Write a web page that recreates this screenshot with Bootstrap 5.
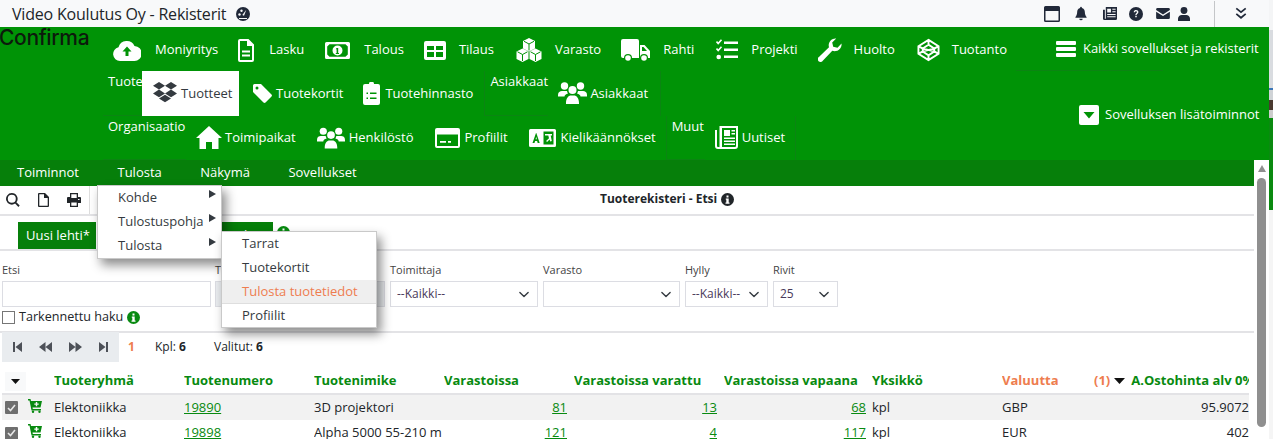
<!DOCTYPE html>
<html lang="fi">
<head>
  <meta charset="UTF-8">
  <title>Video Koulutus Oy - Rekisterit</title>
  <link href="https://cdn.jsdelivr.net/npm/bootstrap@5.3.0/dist/css/bootstrap.min.css" rel="stylesheet">
  <style>
    html, body { height: 439px; overflow: hidden; }
    body { background: #fff; font-family: "Open Sans", "Liberation Sans", sans-serif; font-size: 12px; color: #212529; }
    svg { display: block; flex: none; fill: currentColor; }
    .frame { width: 1269px; height: 439px; position: relative; overflow: hidden; }
    .edge-strip { position: absolute; left: 1269px; top: 0; width: 4px; height: 439px; background: #f5f5f5; }
    .edge-a { height: 30px; background: #f4f5f6; }
    .edge-b { height: 58px; background: #d9dce0; }
    .edge-c { height: 2px; background: #3b77b8; }
    .edge-d { height: 10px; background: #cfd3d6; }
    .edge-e { height: 10px; background: #4a3a30; }
    .edge-f { height: 8px; background: #cccccc; }
    .edge-g { height: 92px; background: #0a8a10; }

    .topbar { height: 27px; background: #f8f9fa; padding: 0 22px 0 12px; }
    .topbar-title { font-size: 16px; letter-spacing: -.2px; margin-right: 10px; }
    .top-icons { color: #212939; }
    .top-sep { width: 1px; height: 26px; background: #c4c6c8; margin: 0 20px 0 24px; }
    .gap-15 { margin-right: 15px; }
    .gap-16 { margin-right: 16px; }
    .gap-12 { margin-right: 12px; }
    .gap-13 { margin-right: 13px; }
    .gap-8 { margin-right: 8px; }

    .green-head { height: 133px; background: #009306; color: #fff; position: relative; }
    .logo-text { position: absolute; left: -1px; top: -1px; font-size: 21px; font-weight: 500; color: #0c1a0c; letter-spacing: -.35px; line-height: 24px; font-family: "Inter", sans-serif; }
    .app-row { height: 44px; padding-left: 113px; }
    .app-link { font-size: 13px; color: #fff; text-decoration: none; display: flex; align-items: center; height: 44px; padding-top: 2px; }
    .sub-row { height: 44.5px; }
    .sub-link { font-size: 13px; color: #fff; display: flex; align-items: center; height: 44.5px; white-space: nowrap; }
    .sub-link.current { background: #fff; color: #343a40; width: 97px; padding-left: 11px; position: relative; z-index: 1; }
    .group-label { font-size: 13px; line-height: 18px; padding: 1px 0 0 5px; height: 44.5px; white-space: nowrap; border-bottom: 1px solid #0b8512; }
    .group-tuote { margin-left: 103px; width: 39px; }
    .group-org { margin-left: 103px; width: 83px; }
    .group-asiakas { margin-left: 11px; width: 64px; border-left: 1px solid #0b8512; }
    .group-muut { width: 39px; border-left: 1px solid #0b8512; }
    .group-end { border-right: 1px solid #0b8512; }
    .ml-10 { margin-left: 10px; }
    .ml-12 { margin-left: 12px; }
    .ml-14 { margin-left: 14px; }
    .ml-20 { margin-left: 20px; }
    .ml-21 { margin-left: 21px; }
    .ml-22 { margin-left: 22px; }
    .ml-23 { margin-left: 23px; }
    .txt-3 span { margin-left: 3px; }
    .txt-4 span { margin-left: 4px; }
    .txt-5 span { margin-left: 5px; }
    .txt-12 span { margin-left: 12px; }
    .txt-13 span { margin-left: 13px; }
    .txt-14 span { margin-left: 14px; }
    .txt-15 span { margin-left: 15px; }

    .green-side { position: absolute; left: 1016px; top: 0; width: 243px; font-size: 13px; white-space: nowrap; }
    .side-all { height: 44px; width: 147px; padding-left: 40px; border-bottom: 1px solid #0b8512; }
    .side-all span { margin-left: 7px; letter-spacing: -.06px; }
    .side-extra { height: 20px; margin-top: 34px; padding-left: 63px; }
    .side-extra span { margin-left: 6px; }

    .submenu-bar { height: 26px; width: 1254px; background: #067f0a; color: #fff; font-size: 13px; padding-left: 17px; gap: 38.5px; }
    .scroll-col { position: absolute; left: 1254px; top: 160px; width: 15px; bottom: 0; background: #fff; }
    .scroll-up { width: 0; height: 0; border-left: 4.5px solid transparent; border-right: 4.5px solid transparent; border-bottom: 7px solid #8f8f8f; margin: 5px auto 6px; }
    .scroll-thumb { width: 9px; height: 249px; margin: 0 auto; background: #8f8f8f; border-radius: 5px; }

    .workarea { width: 1254px; }
    .toolbar { height: 30px; border-bottom: 2px solid #e3e3e6; position: relative; }
    .toolbar-btns { width: 90px; height: 28px; padding-left: 6px; gap: 18px; border-right: 1px solid #dedede; }
    .toolbar-title { font-size: 12px; font-weight: 700; position: absolute; left: 600px; top: 4px; gap: 4px; }
    .tab-strip { height: 35px; border-bottom: 2px solid #e3e3e6; padding: 6px 0 0 18px; }
    .sheet-tab { height: 27px; background: #067f0a; color: #fff; font-size: 13px; line-height: 26px; padding: 0 8px; white-space: nowrap; overflow: hidden; }
    .sheet-tab.first { width: 78px; }
    .sheet-tab.second { width: 51px; margin-left: 126px; }
    .filters { height: 82px; border-bottom: 2px solid #e3e3e6; padding-left: 2px; }
    .filter-cell { margin-right: 5px; }
    .filter-cell.pull { margin-left: -1px; }
    .filter-cell label { display: block; font-size: 11px; color: #444; line-height: 15px; margin-top: 11px; margin-bottom: 4px; white-space: nowrap; }
    .filter-box { height: 26px; border: 1px solid #dcdde3; border-radius: 0; font-size: 12px; padding: 0 6px; color: #4a3a5a; background-color: #fff; }
    .filter-box.form-select { padding-right: 20px; background-position: right 6px center; background-size: 14px 11px; }
    .filter-box:disabled { background: #e9ecef; }
    .w-etsi { width: 209px; }
    .w-numero { width: 170px; }
    .w-toim { width: 148px; }
    .w-varasto { width: 137px; }
    .w-hylly { width: 83px; }
    .w-rivit { width: 65px; }
    .adv-row { font-size: 12.6px; gap: 4px; height: 16px; margin-top: 2px; }
    .adv-check { width: 13px; height: 13px; border: 1px solid #767676; background: #fff; }
    .i-green { color: #088a10; }
    .pager-row { height: 30px; margin-top: -1px; padding-left: 2px; }
    .pager-box { width: 117px; height: 30px; background: #e9ecef; padding: 0 11px; color: #4d5158; }
    .page-no { color: #ee7d4f; font-weight: 700; margin-left: 9px; width: 27px; }
    .pager-kpl { width: 59px; }

    .data-table { table-layout: fixed; width: 1247px; margin: 8px 0 0 2px; font-size: 13px; border-collapse: collapse; }
    .data-table th { height: 24px; padding: 1px 0 2px; color: #088a10; font-weight: 700; border-bottom: 2px solid #e3e3e6; white-space: nowrap; overflow: hidden; vertical-align: middle; background: #fff; }
    .data-table td { height: 26px; padding: 0; white-space: nowrap; overflow: hidden; border: 0; color: #212529; background: transparent; vertical-align: middle; }
    .data-table tr.shaded td { background: #f2f2f2; }
    .data-table a { color: #088a10; text-decoration-thickness: 1px; text-underline-offset: 1px; }
    .data-table th.sorted { color: #ee7d4f; }
    .sort-no { color: #ee7d4f; font-weight: 700; }
    .sort-arrow { margin: 0 6px 0 4px; color: #111; }
    .c-check { width: 26px; } .c-cart { width: 26px; }
    .c-130 { width: 130px; } .c-num { width: 123px; } .c-gap7 { width: 7px; }
    .c-varattu { width: 143px; } .c-vapaa { width: 142px; } .c-gap6 { width: 6px; }
    .c-val { width: 92px; } .c-hinta { width: 155px; }
    .cell-check { width: 13px; height: 13px; background: #6f6f6f; color: #fff; border-radius: 1px; margin-left: 3px; }
    .head-toggle { width: 21px; height: 19px; background: #f8f9fa; margin-left: 3px; color: #111; }
    .cart-icon { margin-bottom: 4px; }
    .num { text-align: right; }

    .fly-menu { position: absolute; background: #fff; border: 1px solid #c9c9c9; box-shadow: 4px 6px 10px rgba(0,0,0,.45); font-size: 13px; color: #343a40; z-index: 5; padding: 0; }
    .fly-one { left: 97px; top: 185px; width: 125px; height: 74px; }
    .fly-two { left: 221px; top: 231px; width: 156px; height: 97px; }
    .fly-item { height: 24px; display: flex; align-items: center; padding-left: 20px; position: relative; }
    .fly-item i { position: absolute; right: 5px; top: 4px; width: 0; height: 0; border-top: 4.5px solid transparent; border-bottom: 4.5px solid transparent; border-left: 7px solid #343a40; }
    .fly-item.hover { background: #efefef; color: #ee7d4f; border-bottom: 1px solid #dedede; }
  </style>
</head>
<body>
<div class="frame">
  <div class="topbar d-flex align-items-center justify-content-between">
    <div class="d-flex align-items-center">
      <span class="topbar-title">Video Koulutus Oy - Rekisterit</span>
      <svg width="14" height="14" viewBox="0 0 14 14" class="top-icons"><circle cx="7" cy="7" r="7"/><circle cx="3.500" cy="7.500" r="1.200" fill="#f8f9fa"/><circle cx="5.500" cy="3.800" r="1.200" fill="#f8f9fa"/><path d="M10.300 2.800 8 8.800 6.300 8z" fill="#f8f9fa"/><path d="M3 11h8v1H3z" fill="#f8f9fa"/></svg>
    </div>
    <div class="d-flex align-items-center top-icons">
      <svg width="16" height="16" viewBox="0 0 16 16" class="gap-15"><path d="M1.500 0h13A1.500 1.500 0 0 1 16 1.500v13a1.500 1.500 0 0 1-1.500 1.500h-13A1.500 1.500 0 0 1 0 14.500v-13A1.500 1.500 0 0 1 1.500 0zM1.500 5v9.500h13V5z" fill-rule="evenodd"/></svg>
      <svg width="12" height="15" viewBox="0 0 14 16" class="gap-16"><path d="M7 16a2 2 0 0 0 2-2H5a2 2 0 0 0 2 2zM7 0a1 1 0 0 0-1 1v.6C3.700 2.100 2.500 4 2.500 6.500c0 2.500-1 4.500-2 5.500v1h13v-1c-1-1-2-3-2-5.500 0-2.500-1.200-4.400-3.500-4.900V1a1 1 0 0 0-1-1z"/></svg>
      <svg width="14" height="14" viewBox="0 0 15 15" class="gap-12"><path d="M3 0h12v12.500a1.500 1.500 0 0 1-1.500 1.500h-12A1.500 1.500 0 0 1 0 12.500V3h2v9.500h1zM4.500 2v4h4V2zM10 2v1h3.500V2zM10 4.500v1h3.500v-1zM4.500 7.500v1h9v-1zM4.500 10v1h9v-1z" fill-rule="evenodd"/></svg>
      <svg width="14" height="14" viewBox="0 0 15 15" class="gap-13"><circle cx="7.500" cy="7.500" r="7.500"/><path d="M5 5.500c.2-1.500 1.300-2.200 2.600-2.200 1.400 0 2.500.8 2.500 2.100 0 1.800-1.900 1.800-1.900 3.300H6.800c0-2.200 1.700-2.200 1.700-3.200 0-.5-.4-.9-1-.9-.6 0-1 .4-1.100 1zM6.700 9.500h1.600v1.600H6.700z" fill="#f8f9fa"/></svg>
      <svg width="14" height="11" viewBox="0 0 15 12" class="gap-8"><path d="M1.500 0h12A1.500 1.500 0 0 1 15 1.500v.7L7.500 7 0 2.200v-.7A1.500 1.500 0 0 1 1.500 0zM0 4l7.500 4.800L15 4v6.500a1.500 1.500 0 0 1-1.500 1.500h-12A1.500 1.500 0 0 1 0 10.500z"/></svg>
      <svg width="12" height="14" viewBox="0 0 13 15"><circle cx="6.500" cy="3.700" r="3.700"/><path d="M0 15v-2.500C0 10 2 8.500 4 8.500h5c2 0 4 1.500 4 4V15z"/></svg>
      <div class="top-sep"></div>
      <svg width="12" height="13" viewBox="0 0 14 14"><path d="M1.500 1 7 5.500 12.500 1M1.500 7.500 7 12l5.500-4.500" fill="none" stroke="currentColor" stroke-width="2"/></svg>
    </div>
  </div>

  <div class="green-head">
    <div class="logo-text">Confirma</div>
    <div class="app-row d-flex">
      <a class="app-link txt-14"><svg width="28" height="21" viewBox="0 0 28 21"><path d="M7 21a7 7 0 0 1-1.500-13.800A8.500 8.500 0 0 1 21.500 6 7.500 7.500 0 0 1 21 21z"/><path d="M14 6.500 9.500 11.500H12.500V16h3v-4.500h3z" fill="#009306"/></svg><span>Moniyritys</span></a>
      <a class="app-link txt-15 ml-20"><svg width="16" height="23" viewBox="0 0 16 23"><path d="M2 0h8.500L16 5.500V21a2 2 0 0 1-2 2H2a2 2 0 0 1-2-2V2a2 2 0 0 1 2-2zm0 2v19h12V7H9V2zM4 11.500h8v2H4zm0 4h8v2H4z" fill-rule="evenodd"/></svg><span>Lasku</span></a>
      <a class="app-link txt-14 ml-21"><svg width="25" height="17" viewBox="0 0 25 17"><path d="M1.500 0h22A1.500 1.500 0 0 1 25 1.500v14a1.500 1.500 0 0 1-1.500 1.500h-22A1.500 1.500 0 0 1 0 15.500v-14A1.500 1.500 0 0 1 1.500 0zm3 2.200L2.200 4.500v8l2.300 2.300h16l2.300-2.300v-8l-2.300-2.300zM12.500 3.500a5 5 0 1 1 0 10 5 5 0 0 1 0-10z" fill-rule="evenodd"/><path d="M11.500 6h1.700v5H14v1h-3.200v-1h.8V7.300h-.8z" fill="#009306"/></svg><span>Talous</span></a>
      <a class="app-link txt-13 ml-20"><svg width="22" height="19" viewBox="0 0 22 19"><path d="M2 0h18a2 2 0 0 1 2 2v15a2 2 0 0 1-2 2H2a2 2 0 0 1-2-2V2a2 2 0 0 1 2-2zm1 5v4h7V5zm9 0v4h7V5zM3 11v5h7v-5zm9 0v5h7v-5z" fill-rule="evenodd"/></svg><span>Tilaus</span></a>
      <a class="app-link txt-13 ml-22"><svg width="26" height="24" viewBox="0 0 26 24"><path d="M13 0l6 3v7.500l-6 3-6-3V3zM6.500 10.500l6 3v7.500l-6 3L.5 21v-7.500zM19.500 10.500l6 3v7.500l-6 3-6-3v-7.500z"/><path d="M8 3.300l5 2.700 5-2.700M13 6v6.500M1.500 13.800l5 2.700 5-2.700M6.500 16.500V23M14.500 13.800l5 2.700 5-2.700M19.500 16.500V23" fill="none" stroke="#009306" stroke-width="1"/></svg><span>Varasto</span></a>
      <a class="app-link txt-13 ml-20"><svg width="29" height="23" viewBox="0 0 29 23"><path d="M2 0h14a2 2 0 0 1 2 2v17H2a2 2 0 0 1-2-2V2a2 2 0 0 1 2-2zM19 6h4.500L29 12v7H19zM21 8v4h5l-3.500-4z" fill-rule="evenodd"/><circle cx="7" cy="19" r="4" fill="#009306"/><circle cx="7" cy="19" r="2.800"/><circle cx="23" cy="19" r="4" fill="#009306"/><circle cx="23" cy="19" r="2.800"/></svg><span>Rahti</span></a>
      <a class="app-link txt-13 ml-22"><svg width="22" height="22" viewBox="0 0 22 22"><path d="M8 2.500h14v2.500H8zM8 9.500h14V12H8zM8 16.500h14V19H8z"/><path d="M.5 2.500 2.200 4.500 5.500.8M.5 9.500l1.700 2 3.300-3.700" fill="none" stroke="currentColor" stroke-width="1.600"/><circle cx="2.700" cy="18" r="2.300"/></svg><span>Projekti</span></a>
      <a class="app-link txt-12 ml-20"><svg width="24" height="24" viewBox="0 0 24 24"><path d="M23.500 5.500a6.800 6.800 0 0 1-9.200 7.200L5 22.500a2.800 2.800 0 1 1-3.800-3.800l9.800-9.400A6.800 6.800 0 0 1 18.200.5l-4 4 1 4.300 4.300 1z"/></svg><span>Huolto</span></a>
      <a class="app-link txt-12 ml-22"><svg width="23" height="24" viewBox="0 0 24 24"><path d="M12 1.500 22.500 8v8L12 22.500 1.500 16V8zM12 6.500 6 10.500v3L12 17.500l6-4v-3zM12 1.500v5M12 17.500v5M1.500 8 6 10.500M22.500 8 18 10.500M1.500 16 6 13.500M22.500 16 18 13.500M6 10.500 18 13.500M18 10.500 6 13.500" fill="none" stroke="currentColor" stroke-width="2"/></svg><span>Tuotanto</span></a>
    </div>
    <div class="sub-row d-flex">
      <div class="group-label group-tuote">Tuote</div>
      <div class="sub-link current txt-4"><svg width="24" height="22" viewBox="0 0 24 22" fill="#2d2d2d"><path d="M6 0l6 3.800L6 7.600 0 3.800zM18 0l6 3.800-6 3.800-6-3.800zM0 11.400l6-3.800 6 3.800-6 3.800zM12 11.400l6-3.800 6 3.800-6 3.800zM6 16.500l6-3.800 6 3.800L12 20.300z"/></svg><span>Tuotteet</span></div>
      <div class="sub-link txt-4 ml-14"><svg width="19" height="19" viewBox="0 0 19 19"><path d="M0 1.500A1.500 1.500 0 0 1 1.500 0H8l10.500 10.500a1.500 1.500 0 0 1 0 2L12.500 18.500a1.500 1.500 0 0 1-2 0L0 8zM4 2.500a1.500 1.500 0 1 0 0 3 1.500 1.500 0 0 0 0-3z" fill-rule="evenodd"/></svg><span>Tuotekortit</span></div>
      <div class="sub-link txt-5 ml-20"><svg width="17" height="23" viewBox="0 0 17 23"><path d="M2 2h4a2.500 2.500 0 0 1 5 0h4a2 2 0 0 1 2 2v17a2 2 0 0 1-2 2H2a2 2 0 0 1-2-2V4a2 2 0 0 1 2-2zM3.500 10.500v1.500H5v-1.500zM7 10.500V12h6.500v-1.500zM3.500 15.500V17H5v-1.500zM7 15.500V17h6.500v-1.500z" fill-rule="evenodd"/></svg><span>Tuotehinnasto</span></div>
      <div class="group-label group-asiakas">Asiakkaat</div>
      <div class="sub-link txt-3 ml-10"><svg width="29" height="22" viewBox="0 0 29 22"><circle cx="6.500" cy="4" r="3.700"/><circle cx="22.500" cy="4" r="3.700"/><circle cx="14.500" cy="8" r="4"/><path d="M0 13c0-3 2-4 4-4h5a6 6 0 0 0 1 2.500c-2 .5-3.500 1.500-3.500 3H0zM29 13c0-3-2-4-4-4h-5a6 6 0 0 1-1 2.500c2 .5 3.500 1.500 3.500 3H29zM8 21c0-5 2.500-7.500 5-7.500h3c2.500 0 5 2.500 5 7.500v1H8z"/></svg><span>Asiakkaat</span></div>
      <div class="group-end ml-12"></div>
    </div>
    <div class="sub-row d-flex">
      <div class="group-label group-org">Organisaatio</div>
      <div class="sub-link txt-3 ml-10"><svg width="26" height="23" viewBox="0 0 26 23"><path d="M13 0 26 12h-3.500v11H16v-7h-6v7H3.500V12H0z"/></svg><span>Toimipaikat</span></div>
      <div class="sub-link txt-4 ml-21"><svg width="28" height="22" viewBox="0 0 29 22"><circle cx="6.500" cy="4" r="3.700"/><circle cx="22.500" cy="4" r="3.700"/><circle cx="14.500" cy="8" r="4"/><path d="M0 13c0-3 2-4 4-4h5a6 6 0 0 0 1 2.500c-2 .5-3.500 1.500-3.500 3H0zM29 13c0-3-2-4-4-4h-5a6 6 0 0 1-1 2.500c2 .5 3.500 1.500 3.500 3H29zM8 21c0-5 2.500-7.500 5-7.500h3c2.500 0 5 2.500 5 7.500v1H8z"/></svg><span>Henkilöstö</span></div>
      <div class="sub-link txt-4 ml-22"><svg width="25" height="20" viewBox="0 0 25 20"><path d="M2 0h21a2 2 0 0 1 2 2v16a2 2 0 0 1-2 2H2a2 2 0 0 1-2-2V2a2 2 0 0 1 2-2zm0 6.500V18h21V6.500zM5 13h6v1.800H5zm8 0h3v1.800h-3z" fill-rule="evenodd"/></svg><span>Profiilit</span></div>
      <div class="sub-link txt-5 ml-21"><svg width="27" height="18" viewBox="0 0 27 18"><path d="M1.500 0h24A1.500 1.500 0 0 1 27 1.500v15a1.500 1.500 0 0 1-1.500 1.500h-24A1.500 1.500 0 0 1 0 16.500v-15A1.500 1.500 0 0 1 1.500 0zM14.500 2.500v13h10v-13z" fill-rule="evenodd"/><path d="M7 4 3.500 14h2l.6-2h2l.6 2h2L7.300 4zm-.4 6.200.6-2.500.7 2.500z" fill="#009306"/><path d="M16 5h7v1.500h-1.300L22.800 12l-1.500.5-.8-2-2.400 2.500-1-1 2.900-2.700-.7-2.800H16z"/></svg><span>Kielikäännökset</span></div>
      <div class="group-label group-muut ml-10">Muut</div>
      <div class="sub-link txt-4 ml-10"><svg width="23" height="23" viewBox="0 0 23 23"><path d="M5.500 0H23v20a3 3 0 0 1-3 3H3a3 3 0 0 1-3-3V4h2v16a1 1 0 0 0 1 1h1.500V0zM7 2v19h13a1 1 0 0 0 1-1V2zM9 4h6v6H9zm7.500 0H20v1.500h-3.500zm0 3H20v1.500h-3.500zM9 11.500h11V13H9zm0 3h11V16H9zm0 3h11V19H9z" fill-rule="evenodd"/></svg><span>Uutiset</span></div>
      <div class="group-end ml-10"></div>
    </div>
    <div class="green-side">
      <div class="side-all d-flex align-items-center"><svg width="20" height="16" viewBox="0 0 20 16"><path d="M1 0h18a1 1 0 0 1 1 1v2a1 1 0 0 1-1 1H1a1 1 0 0 1-1-1V1a1 1 0 0 1 1-1zM1 6h18a1 1 0 0 1 1 1v2a1 1 0 0 1-1 1H1a1 1 0 0 1-1-1V7a1 1 0 0 1 1-1zM1 12h18a1 1 0 0 1 1 1v2a1 1 0 0 1-1 1H1a1 1 0 0 1-1-1v-2a1 1 0 0 1 1-1z"/></svg><span>Kaikki sovellukset ja rekisterit</span></div>
      <div class="side-extra d-flex align-items-center"><svg width="20" height="20" viewBox="0 0 20 20"><path d="M2 0h16a2 2 0 0 1 2 2v16a2 2 0 0 1-2 2H2a2 2 0 0 1-2-2V2a2 2 0 0 1 2-2zm2.500 7 5.500 6.500L15.500 7z" fill-rule="evenodd"/></svg><span>Sovelluksen lisätoiminnot</span></div>
    </div>
  </div>

  <div class="submenu-bar d-flex align-items-center">
    <span>Toiminnot</span><span>Tulosta</span><span>Näkymä</span><span>Sovellukset</span>
  </div>

  <div class="workarea">
    <div class="toolbar">
      <div class="toolbar-btns d-flex align-items-center">
        <svg width="14" height="14" viewBox="0 0 14 14"><path d="M5.800 0a5.800 5.800 0 0 1 4.600 9.300l3.300 3.300-1.300 1.300-3.300-3.300A5.800 5.800 0 1 1 5.800 0zm0 1.800a4 4 0 1 0 0 8 4 4 0 0 0 0-8z" fill-rule="evenodd"/></svg>
        <svg width="11" height="14" viewBox="0 0 11 14"><path d="M1 0h6l4 4v9a1 1 0 0 1-1 1H1a1 1 0 0 1-1-1V1a1 1 0 0 1 1-1zm.3 1.300v11.400h8.400V5H6V1.300z" fill-rule="evenodd"/></svg>
        <svg width="14" height="14" viewBox="0 0 14 14"><path d="M3 0h8v4h2a1 1 0 0 1 1 1v5h-3v4H3v-4H0V5a1 1 0 0 1 1-1h2zm1.300 1.300V5h5.400V1.300zM4.300 9.500v3.200h5.400V9.500zM11 6v1h1.500V6z" fill-rule="evenodd"/></svg>
      </div>
      <div class="toolbar-title d-flex align-items-center"><span>Tuoterekisteri - Etsi</span>
        <svg width="13" height="13" viewBox="0 0 13 13"><circle cx="6.500" cy="6.500" r="6.500"/><path d="M5.500 2.500h2v2h-2zM4.800 5.500h2.900v4h.8v1.200h-4V9.500h.8V6.700h-.5z" fill="#fff"/></svg>
      </div>
    </div>
    <div class="tab-strip d-flex align-items-start">
      <div class="sheet-tab first">Uusi lehti*</div>
      <div class="sheet-tab second">Lehti</div>
      <svg class="i-green ms-1 mt-1" width="13" height="13" viewBox="0 0 13 13"><circle cx="6.500" cy="6.500" r="6.500"/><path d="M5.500 2.500h2v2h-2zM4.800 5.500h2.900v4h.8v1.200h-4V9.500h.8V6.700h-.5z" fill="#fff"/></svg>
    </div>
    <div class="filters">
      <div class="d-flex">
        <div class="filter-cell"><label>Etsi</label><input class="form-control filter-box w-etsi"></div>
        <div class="filter-cell pull"><label>Tuotenumero</label><input class="form-control filter-box w-numero" disabled></div>
        <div class="filter-cell"><label>Toimittaja</label><select class="form-select filter-box w-toim"><option>--Kaikki--</option></select></div>
        <div class="filter-cell"><label>Varasto</label><select class="form-select filter-box w-varasto"><option></option></select></div>
        <div class="filter-cell"><label>Hylly</label><select class="form-select filter-box w-hylly"><option>--Kaikki--</option></select></div>
        <div class="filter-cell"><label>Rivit</label><select class="form-select filter-box w-rivit"><option>25</option></select></div>
      </div>
      <div class="adv-row d-flex align-items-center"><span class="adv-check"></span><span>Tarkennettu haku</span>
        <svg class="i-green" width="13" height="13" viewBox="0 0 13 13"><circle cx="6.500" cy="6.500" r="6.500"/><path d="M5.500 2.500h2v2h-2zM4.800 5.500h2.900v4h.8v1.200h-4V9.500h.8V6.700h-.5z" fill="#fff"/></svg>
      </div>
    </div>
    <div class="pager-row d-flex align-items-center">
      <div class="pager-box d-flex align-items-center justify-content-between">
        <svg width="9" height="10" viewBox="0 0 9 10"><path d="M0 0h2v10H0zM9 0v10L2.500 5z"/></svg>
        <svg width="13" height="10" viewBox="0 0 13 10"><path d="M6.500 0v10L0 5zM13 0v10L6.500 5z"/></svg>
        <svg width="13" height="10" viewBox="0 0 13 10"><path d="M0 0v10l6.500-5zM6.500 0v10L13 5z"/></svg>
        <svg width="9" height="10" viewBox="0 0 9 10"><path d="M0 0v10l6.500-5zM7 0h2v10H7z"/></svg>
      </div>
      <span class="page-no">1</span>
      <span class="pager-kpl">Kpl: <b>6</b></span>
      <span>Valitut: <b>6</b></span>
    </div>

    <table class="data-table">
      <colgroup>
        <col class="c-check"><col class="c-cart"><col class="c-130"><col class="c-130"><col class="c-130"><col class="c-num"><col class="c-gap7"><col class="c-varattu"><col class="c-gap7"><col class="c-vapaa"><col class="c-gap6"><col class="c-130"><col class="c-val"><col class="c-hinta">
      </colgroup>
      <thead>
        <tr>
          <th colspan="2"><div class="head-toggle d-flex align-items-center justify-content-center"><svg width="9" height="5" viewBox="0 0 9 5"><path d="M0 0h9L4.500 5z"/></svg></div></th>
          <th>Tuoteryhmä</th><th>Tuotenumero</th><th>Tuotenimike</th><th colspan="2">Varastoissa</th><th colspan="2">Varastoissa varattu</th><th colspan="2">Varastoissa vapaana</th><th>Yksikkö</th><th class="sorted">Valuutta</th>
          <th><span class="d-flex align-items-center"><span class="sort-no">(1)</span><svg class="sort-arrow" width="11" height="6" viewBox="0 0 11 6"><path d="M0 0h11L5.500 6z"/></svg>A.Ostohinta alv 0%</span></th>
        </tr>
      </thead>
      <tbody>
        <tr class="shaded">
          <td><div class="cell-check d-flex align-items-center justify-content-center"><svg width="9" height="8" viewBox="0 0 9 8"><path d="M1 4l2.500 2.500L8 1" fill="none" stroke="#e8e8e8" stroke-width="1.600"/></svg></div></td>
          <td><svg class="i-green cart-icon" width="14" height="14" viewBox="0 0 14 14"><path d="M0 0h2.500l.5 2h11l-1.500 6.500H4.500l.3 1.500H13v1.500H3.500L1.500 1.500H0z"/><circle cx="5" cy="12.800" r="1.200"/><circle cx="11.500" cy="12.800" r="1.200"/><path d="M7.800 3h1.400v1.500h1.500v1.200H9.200v1.500H7.800V5.700H6.300V4.500h1.500z" fill="#f2f2f2"/></svg></td>
          <td>Elektoniikka</td><td><a href="#">19890</a></td><td>3D projektori</td><td class="num"><a href="#">81</a></td><td></td><td class="num"><a href="#">13</a></td><td></td><td class="num"><a href="#">68</a></td><td></td><td>kpl</td><td>GBP</td><td class="num">95.9072</td>
        </tr>
        <tr>
          <td><div class="cell-check d-flex align-items-center justify-content-center"><svg width="9" height="8" viewBox="0 0 9 8"><path d="M1 4l2.500 2.500L8 1" fill="none" stroke="#e8e8e8" stroke-width="1.600"/></svg></div></td>
          <td><svg class="i-green cart-icon" width="14" height="14" viewBox="0 0 14 14"><path d="M0 0h2.500l.5 2h11l-1.500 6.500H4.500l.3 1.500H13v1.500H3.500L1.500 1.500H0z"/><circle cx="5" cy="12.800" r="1.200"/><circle cx="11.500" cy="12.800" r="1.200"/><path d="M7.800 3h1.400v1.500h1.500v1.200H9.200v1.500H7.800V5.700H6.300V4.500h1.500z" fill="#fff"/></svg></td>
          <td>Elektoniikka</td><td><a href="#">19898</a></td><td>Alpha 5000 55-210 m</td><td class="num"><a href="#">121</a></td><td></td><td class="num"><a href="#">4</a></td><td></td><td class="num"><a href="#">117</a></td><td></td><td>kpl</td><td>EUR</td><td class="num">402</td>
        </tr>
      </tbody>
    </table>
  </div>

  <div class="scroll-col"><div class="scroll-up"></div><div class="scroll-thumb"></div></div>

  <div class="fly-menu fly-one">
    <div class="fly-item">Kohde<i></i></div>
    <div class="fly-item">Tulostuspohja<i></i></div>
    <div class="fly-item">Tulosta<i></i></div>
  </div>
  <div class="fly-menu fly-two">
    <div class="fly-item">Tarrat</div>
    <div class="fly-item">Tuotekortit</div>
    <div class="fly-item hover">Tulosta tuotetiedot</div>
    <div class="fly-item">Profiilit</div>
  </div>
</div>
<div class="edge-strip">
  <div class="edge-a"></div><div class="edge-b"></div><div class="edge-c"></div><div class="edge-d"></div><div class="edge-e"></div><div class="edge-f"></div><div class="edge-g"></div>
</div>
<script src="https://cdn.jsdelivr.net/npm/bootstrap@5.3.0/dist/js/bootstrap.bundle.min.js"></script>
</body>
</html>
